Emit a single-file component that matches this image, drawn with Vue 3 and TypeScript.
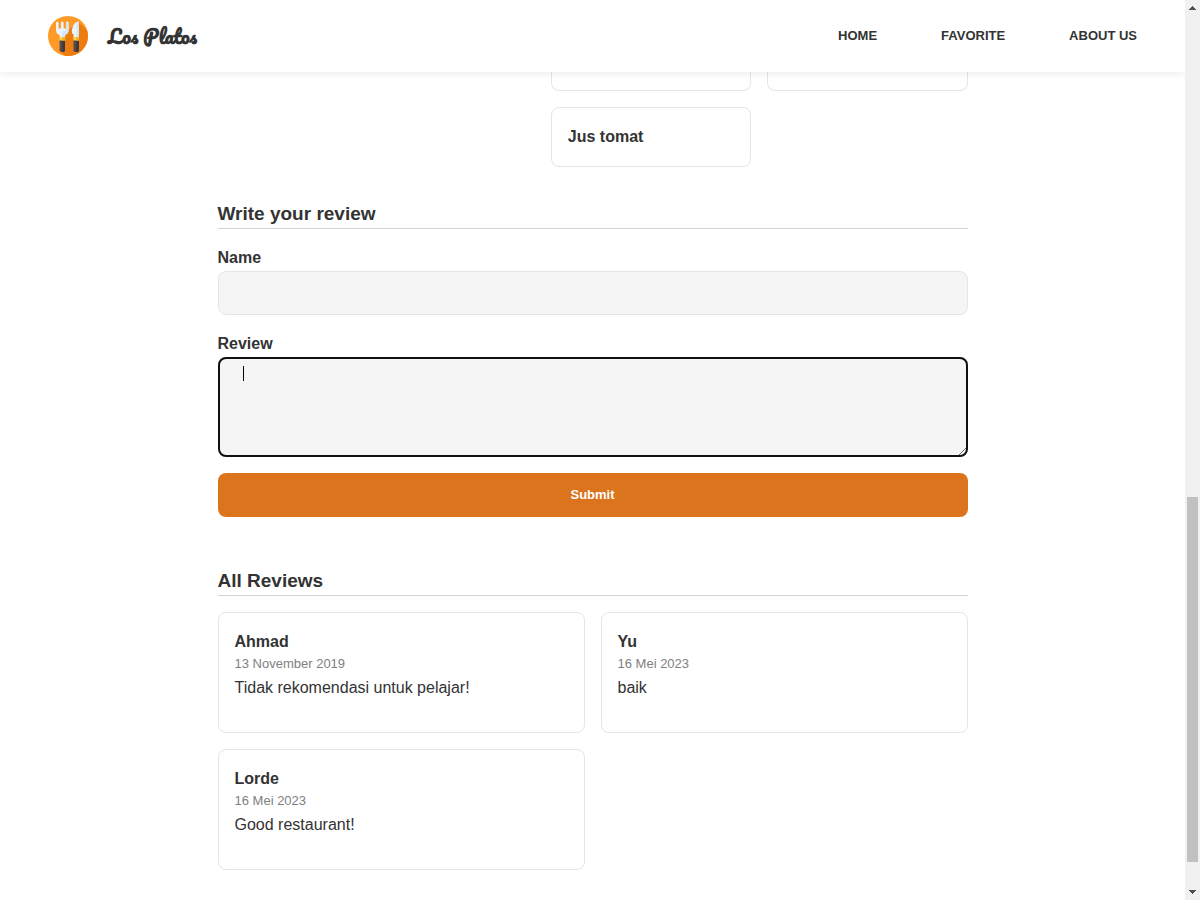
<script setup lang="ts">
import { ref } from 'vue'

interface Review {
  name: string
  date: string
  comment: string
}

const links: string[] = ['Home', 'Favorite', 'About Us']
const drinks: string[] = ['Jus tomat']
const reviews: Review[] = [
  { name: 'Ahmad', date: '13 November 2019', comment: 'Tidak rekomendasi untuk pelajar!' },
  { name: 'Yu', date: '16 Mei 2023', comment: 'baik' },
  { name: 'Lorde', date: '16 Mei 2023', comment: 'Good restaurant!' },
]

const name = ref('')
const review = ref('')
</script>

<template>
  <div class="frame">
    <div class="page">
      <header class="bar">
        <a class="brand" href="#">
          <svg class="logo" viewBox="0 0 40 40" aria-hidden="true">
            <defs>
              <clipPath id="disc"><circle cx="20" cy="20" r="20" /></clipPath>
            </defs>
            <g clip-path="url(#disc)">
              <rect width="40" height="40" fill="#ff9a27" />
              <path d="M20 14L30.500 6L40 15V40H17L12 35Z" fill="#ee7d11" />
            </g>
            <path d="M8 6.500Q9.300 4.500 10.600 6.500V12.500H13V6.500Q14.300 4.500 15.600 6.500V12.500H18V6.500Q19.300 4.500 20.600 6.500V14.500Q20.400 18 16.900 19V22H11.700V19Q8.200 18 8 14.500Z" fill="#e8f5fe" />
            <path d="M18 6.500Q19.300 4.500 20.600 6.500V14.500Q20.400 18 16.900 19V22H14.300V15.500Q18 15.500 18 12.500Z" fill="#d3e7f7" />
            <path d="M30.800 5.500V22H25.600V18.500Q23.600 18 23.900 14Q25 6 30.800 5.500Z" fill="#e8f5fe" />
            <path d="M30.800 5.500V22H28.500V6.200Q29.600 5.600 30.800 5.500Z" fill="#d3e7f7" />
            <path d="M11.600 24H17V34.500Q16.800 36 14.300 36Q11.800 36 11.600 34.500Z" fill="#544a4e" />
            <path d="M14.300 24H17V34.500Q16.800 36 14.300 36Z" fill="#41383c" />
            <path d="M25.500 24H30.900V34.500Q30.700 36 28.200 36Q25.700 36 25.500 34.500Z" fill="#544a4e" />
            <path d="M28.200 24H30.900V34.500Q30.700 36 28.200 36Z" fill="#41383c" />
            <rect x="11.500" y="21" width="5.600" height="3.500" fill="#ffd34d" />
            <rect x="14.300" y="21" width="2.800" height="3.500" fill="#f3b52c" />
            <rect x="25.400" y="21" width="5.600" height="3.500" fill="#ffd34d" />
            <rect x="28.200" y="21" width="2.800" height="3.500" fill="#f3b52c" />
          </svg>
          <span class="brand-name">Los Platos</span>
        </a>
        <nav class="nav">
          <a v-for="link in links" :key="link" href="#">{{ link }}</a>
        </nav>
      </header>

      <main class="content">
        <section class="menu">
          <ul class="menu-list">
            <li class="menu-card cut"></li>
            <li class="menu-card cut"></li>
            <li v-for="drink in drinks" :key="drink" class="menu-card">{{ drink }}</li>
          </ul>
        </section>

        <section class="write">
          <h3>Write your review</h3>
          <form class="form" @submit.prevent>
            <div class="field">
              <label for="name">Name</label>
              <input id="name" v-model="name" type="text" />
            </div>
            <div class="field">
              <label for="review">Review</label>
              <div class="area">
                <textarea id="review" v-model="review"></textarea>
                <span class="caret" aria-hidden="true"></span>
              </div>
            </div>
            <button type="submit">Submit</button>
          </form>
        </section>

        <section class="all">
          <h3>All Reviews</h3>
          <div class="reviews">
            <article v-for="item in reviews" :key="item.name" class="review">
              <h4>{{ item.name }}</h4>
              <p class="date">{{ item.date }}</p>
              <p class="comment">{{ item.comment }}</p>
            </article>
          </div>
        </section>
      </main>
    </div>

    <div class="scrollbar" aria-hidden="true">
      <svg class="arrow" viewBox="0 0 15 15" shape-rendering="crispEdges">
        <path d="M7 6H8V7H9V8H10V9H11V10H4V9H5V8H6V7H7Z" fill="#505050" />
      </svg>
      <div class="before"></div>
      <div class="thumb"></div>
      <div class="after"></div>
      <svg class="arrow" viewBox="0 0 15 15" shape-rendering="crispEdges">
        <path d="M4 5H11V6H10V7H9V8H8V9H7V8H6V7H5V6H4Z" fill="#505050" />
      </svg>
    </div>
  </div>
</template>

<style>
body {
  margin: 0;
  background: #fff;
}
</style>

<style scoped>
.frame {
  display: grid;
  grid-template-columns: 1fr 15px;
  color: #333;
  font-family: "Liberation Sans", Arial, sans-serif;
  font-size: 16px;
  line-height: 26px;
}

.frame * {
  box-sizing: border-box;
}

.page {
  overflow: hidden;
}

.bar {
  position: relative;
  z-index: 1;
  display: flex;
  align-items: center;
  justify-content: space-between;
  height: 72px;
  padding: 0 48px;
  background: #fff;
  box-shadow: 0 0 10px rgba(0, 0, 0, 0.1);
}

.brand {
  display: flex;
  align-items: center;
  gap: 20px;
  color: #333;
  text-decoration: none;
}

.logo {
  width: 40px;
  height: 40px;
}

.brand-name {
  font-family: Pacifico, cursive;
  font-size: 19px;
  font-weight: 700;
}

.nav {
  display: flex;
  gap: 64px;
}

.nav a {
  color: #333;
  font-size: 13px;
  font-weight: 700;
  text-decoration: none;
  text-transform: uppercase;
}

.content {
  max-width: 750px;
  margin: 0 auto;
}

.menu {
  display: grid;
  grid-template-columns: 4fr 5fr;
}

.menu-list {
  grid-column: 2;
  display: grid;
  grid-template-columns: 1fr 1fr;
  gap: 16px;
  margin: 0;
  padding: 0;
  list-style: none;
}

.menu-card {
  padding: 16px;
  border: 1px solid #e5e5e5;
  border-radius: 8px;
  background: #fff;
  font-weight: 700;
}

.menu-card.cut {
  height: 19px;
  padding: 0;
  border-top: 0;
  border-radius: 0 0 8px 8px;
}

h3 {
  margin: 0 0 16px;
  border-bottom: 1px solid #d5d5d5;
  font-size: 19px;
  line-height: 29px;
}

.write {
  margin-top: 32px;
}

.form {
  display: flex;
  flex-direction: column;
  gap: 16px;
}

.field {
  display: flex;
  flex-direction: column;
}

label {
  font-weight: 700;
}

input,
textarea {
  display: block;
  width: 100%;
  border: 1px solid #e5e5e5;
  border-radius: 8px;
  background: #f5f5f5;
  color: #333;
  font: inherit;
}

input {
  height: 44px;
  padding: 0 24px;
}

.area {
  position: relative;
}

textarea {
  height: 100px;
  padding: 8px 24px;
  outline: 2px solid #101010;
  outline-offset: -2px;
  resize: vertical;
}

.caret {
  position: absolute;
  top: 9px;
  left: 25px;
  width: 1px;
  height: 15px;
  background: #000;
}

button {
  height: 44px;
  padding: 0 16px 2px;
  border: 0;
  border-radius: 8px;
  background: #db741c;
  color: #fff;
  font-family: inherit;
  font-size: 13px;
  font-weight: 700;
}

.all {
  margin-top: 49px;
}

.reviews {
  display: grid;
  grid-template-columns: 1fr 1fr;
  gap: 16px;
}

.review {
  padding: 16px 16px 31px;
  border: 1px solid #e5e5e5;
  border-radius: 8px;
  background: #fff;
}

h4,
p {
  margin: 0;
}

h4 {
  font-size: 16px;
}

.date {
  margin-bottom: 2px;
  color: #808080;
  font-size: 13px;
  line-height: 18px;
}

.scrollbar {
  position: sticky;
  top: 0;
  display: flex;
  flex-direction: column;
  height: 100vh;
  background: #f1f1f1;
}

.arrow {
  flex: none;
  width: 15px;
  height: 15px;
}

.before {
  flex: 482;
}

.thumb {
  flex: 365;
  margin: 0 2px;
  background: #c1c1c1;
}

.after {
  flex: 23;
}
</style>
